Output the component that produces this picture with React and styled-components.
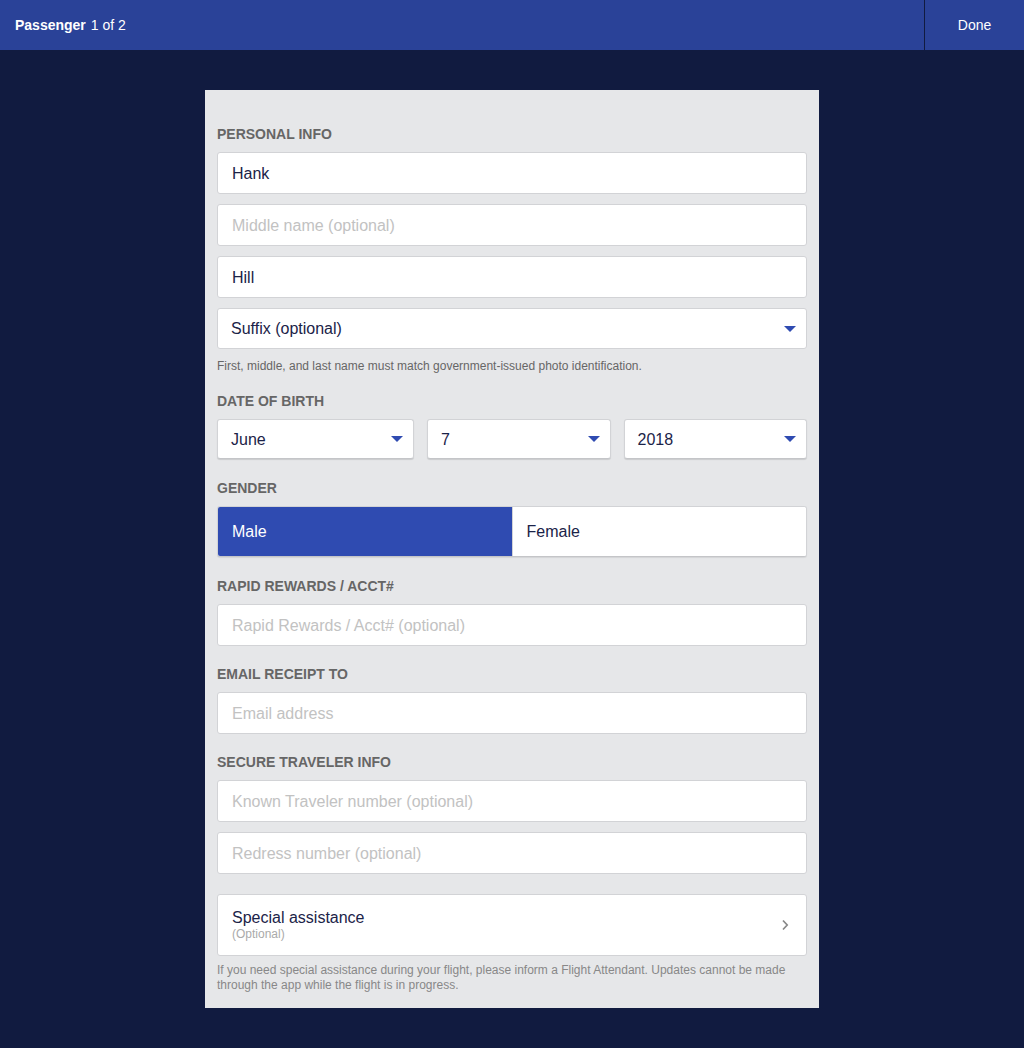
import styled, { createGlobalStyle } from "styled-components";

const GlobalStyle = createGlobalStyle`
    html, body {
        margin: 0;
        padding: 0;
        background-color: #111b40;
        font-family: "Liberation Sans", Arial, sans-serif;
    }
    * {
        box-sizing: border-box;
    }
`

const colores = {
    azulBarra: "#2a4298",
    azulActivo: "#2f4bb1",
    fondo: "#111b40",
    panel: "#e6e7e9",
    texto: "#1b2348",
    etiqueta: "#666",
    placeholder: "#c2c2c2",
    borde: "#d2d3d6",
};

const Pagina = styled.div`
    min-height: 1048px;
    background-color: ${colores.fondo};
`
const Barra = styled.div`
    height: 50px;
    background-color: ${colores.azulBarra};
    display: flex;
    align-items: stretch;
    color: #fff;
    font-size: 14px;
`
const Titulo = styled.div`
    flex: 1;
    display: flex;
    align-items: center;
    padding-left: 15px;

    b {
        margin-right: 5px;
    }
`
const Hecho = styled.div`
    width: 100px;
    border-left: 1px solid ${colores.fondo};
    display: flex;
    align-items: center;
    justify-content: center;
    cursor: pointer;
`
const Panel = styled.div`
    width: 614px;
    margin: 40px auto 0;
    background-color: ${colores.panel};
    padding: 16px 12px 15px;
`
const Etiqueta = styled.div`
    margin-top: 20px;
    margin-bottom: 10px;
    font-size: 14px;
    line-height: 16px;
    font-weight: bold;
    color: ${colores.etiqueta};
    text-transform: uppercase;
`
const Campos = styled.div`
    display: flex;
    flex-direction: column;
    gap: 10px;
`
const Entrada = styled.input`
    display: block;
    width: 100%;
    height: 42px;
    border: 1px solid ${colores.borde};
    border-radius: 3px;
    background: #fff;
    padding: 1px 14px 0;
    font-family: inherit;
    font-size: 16px;
    color: ${colores.texto};
    outline: none;

    &::placeholder {
        color: ${colores.placeholder};
    }
`
const Selector = styled.div`
    position: relative;
    height: ${(p) => p.$alto || 41}px;
    background: #fff;
    border: 1px solid ${colores.borde};
    border-bottom-color: ${(p) => (p.$sombra ? "#c4c5c8" : colores.borde)};
    box-shadow: ${(p) => (p.$sombra ? "0 1px 1px rgba(0,0,0,0.12)" : "none")};
    border-radius: 3px;
    display: flex;
    align-items: center;
    padding: 1px 13px 0;
    font-size: 16px;
    color: ${colores.texto};

    svg {
        position: absolute;
        right: 10px;
        top: 50%;
        margin-top: -3px;
    }
`
const Ayuda = styled.p`
    margin: ${(p) => p.$arriba || 10}px 0 0;
    font-size: 12px;
    line-height: ${(p) => p.$linea || 14}px;
    color: ${(p) => p.$color || "#666"};
`
const Fecha = styled.div`
    display: grid;
    grid-template-columns: 197px 1fr 1fr;
    gap: 13px;
    margin-bottom: 21px;
`
const Genero = styled.div`
    display: flex;
    height: 51px;
    margin-bottom: 21px;
    border: 1px solid ${colores.borde};
    border-bottom-color: #c4c5c8;
    box-shadow: 0 1px 1px rgba(0,0,0,0.08);
    border-radius: 3px;
    overflow: hidden;
    background: #fff;
`
const Opcion = styled.div`
    flex: 1;
    display: flex;
    align-items: center;
    padding: 1px 0 0 14px;
    font-size: 16px;
    background: ${(p) => (p.$activo ? colores.azulActivo : "#fff")};
    color: ${(p) => (p.$activo ? "#fff" : colores.texto)};
    border-left: ${(p) => (p.$activo ? "none" : "1px solid " + colores.borde)};
`
const Asistencia = styled.div`
    margin-top: 20px;
    height: 62px;
    background: #fff;
    border: 1px solid ${colores.borde};
    border-radius: 3px;
    display: flex;
    align-items: center;
    justify-content: space-between;
    padding: 0 17px 0 14px;
    cursor: pointer;

    div {
        display: flex;
        flex-direction: column;
    }
    span {
        font-size: 16px;
        line-height: 18px;
        color: ${colores.texto};
    }
    small {
        font-size: 12px;
        line-height: 14px;
        color: #aaa;
    }
`

const Flecha = () => (
    <svg width="12" height="6" viewBox="0 0 12 6">
        <path d="M0 0 L12 0 L6 6 Z" fill={colores.azulActivo} />
    </svg>
)

const Chevron = () => (
    <svg width="8" height="12" viewBox="0 0 8 12">
        <path d="M2 1.5 L6.2 6 L2 10.5" fill="none" stroke="#888" strokeWidth="1.7" />
    </svg>
)

const App = () => {
    return (
        <Pagina>
            <GlobalStyle />
            <Barra>
                <Titulo>
                    <b>Passenger</b> 1 of 2
                </Titulo>
                <Hecho>Done</Hecho>
            </Barra>
            <Panel>
                <Etiqueta>Personal info</Etiqueta>
                <Campos>
                    <Entrada defaultValue="Hank" />
                    <Entrada placeholder="Middle name (optional)" />
                    <Entrada defaultValue="Hill" />
                    <Selector>
                        Suffix (optional)
                        <Flecha />
                    </Selector>
                </Campos>
                <Ayuda>First, middle, and last name must match government-issued photo identification.</Ayuda>

                <Etiqueta>Date of birth</Etiqueta>
                <Fecha>
                    {["June", "7", "2018"].map((valor) => (
                        <Selector key={valor} $alto={40} $sombra>
                            {valor}
                            <Flecha />
                        </Selector>
                    ))}
                </Fecha>

                <Etiqueta>Gender</Etiqueta>
                <Genero>
                    <Opcion $activo>Male</Opcion>
                    <Opcion>Female</Opcion>
                </Genero>

                <Etiqueta>Rapid Rewards / Acct#</Etiqueta>
                <Entrada placeholder="Rapid Rewards / Acct# (optional)" />

                <Etiqueta>Email receipt to</Etiqueta>
                <Entrada placeholder="Email address" />

                <Etiqueta>Secure traveler info</Etiqueta>
                <Campos>
                    <Entrada placeholder="Known Traveler number (optional)" />
                    <Entrada placeholder="Redress number (optional)" />
                </Campos>

                <Asistencia>
                    <div>
                        <span>Special assistance</span>
                        <small>(Optional)</small>
                    </div>
                    <Chevron />
                </Asistencia>
                <Ayuda $arriba={7} $linea={15} $color="#888">
                    If you need special assistance during your flight, please inform a Flight Attendant. Updates cannot be made through the app while the flight is in progress.
                </Ayuda>
            </Panel>
        </Pagina>
    )
}

export default App;
